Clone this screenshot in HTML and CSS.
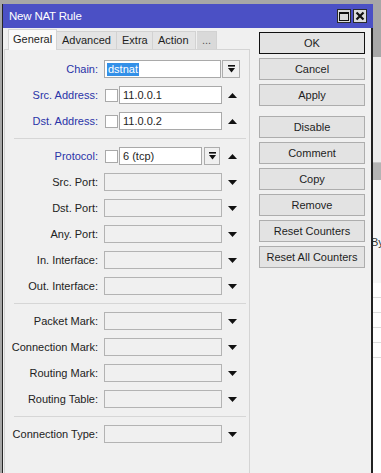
FILE: index.html
```html
<!DOCTYPE html>
<html lang="en">
<head>
  <meta charset="UTF-8" />
  <title>New NAT Rule</title>
  <link rel="stylesheet" href="styles.css">
</head>
<body>
  <div class="screen">
    <div class="window">
      <div class="titlebar">
        <span class="title">New NAT Rule</span>
        <div class="tb-btns">
          <span class="tb-btn"><span class="max-box"></span></span>
          <span class="tb-btn">
            <svg width="10" height="10" viewBox="0 0 10 10"><path d="M1.5 1.5l7 7M8.5 1.5l-7 7" stroke="#111" stroke-width="2.2"/></svg>
          </span>
        </div>
      </div>

      <div class="main">
        <div class="left">
          <div class="tabs">
            <span class="tab active">General</span>
            <span class="tab w-adv">Advanced</span>
            <span class="tab w-extra">Extra</span>
            <span class="tab w-action">Action</span>
            <span class="tab more">...</span>
          </div>

          <div class="page">
            <div class="row">
              <label class="lbl blue">Chain:</label>
              <div class="input chain"><span class="sel">dstnat</span></div>
              <span class="dd chain-dd">
                <svg width="7" height="8" viewBox="0 0 7 8"><rect width="7" height="1.6"/><path d="M0 3h7l-3.5 4.5z"/></svg>
              </span>
            </div>
            <div class="row">
              <label class="lbl blue">Src. Address:</label>
              <span class="check"></span>
              <div class="input addr">11.0.0.1</div>
              <span class="arrow"><svg width="9" height="5" viewBox="0 0 9 5"><path d="M0 5h9L4.5 0z"/></svg></span>
            </div>
            <div class="row">
              <label class="lbl blue">Dst. Address:</label>
              <span class="check"></span>
              <div class="input addr">11.0.0.2</div>
              <span class="arrow"><svg width="9" height="5" viewBox="0 0 9 5"><path d="M0 5h9L4.5 0z"/></svg></span>
            </div>

            <div class="sep"></div>

            <div class="row">
              <label class="lbl blue">Protocol:</label>
              <span class="check"></span>
              <div class="input proto">6 (tcp)</div>
              <span class="dd proto-dd">
                <svg width="7" height="8" viewBox="0 0 7 8"><rect width="7" height="1.6"/><path d="M0 3h7l-3.5 4.5z"/></svg>
              </span>
              <span class="arrow"><svg width="9" height="5" viewBox="0 0 9 5"><path d="M0 5h9L4.5 0z"/></svg></span>
            </div>
            <div class="row">
              <label class="lbl">Src. Port:</label>
              <div class="input empty"></div>
              <span class="arrow"><svg width="9" height="5" viewBox="0 0 9 5"><path d="M0 0h9L4.5 5z"/></svg></span>
            </div>
            <div class="row">
              <label class="lbl">Dst. Port:</label>
              <div class="input empty"></div>
              <span class="arrow"><svg width="9" height="5" viewBox="0 0 9 5"><path d="M0 0h9L4.5 5z"/></svg></span>
            </div>
            <div class="row">
              <label class="lbl">Any. Port:</label>
              <div class="input empty"></div>
              <span class="arrow"><svg width="9" height="5" viewBox="0 0 9 5"><path d="M0 0h9L4.5 5z"/></svg></span>
            </div>
            <div class="row">
              <label class="lbl">In. Interface:</label>
              <div class="input empty"></div>
              <span class="arrow"><svg width="9" height="5" viewBox="0 0 9 5"><path d="M0 0h9L4.5 5z"/></svg></span>
            </div>
            <div class="row">
              <label class="lbl">Out. Interface:</label>
              <div class="input empty"></div>
              <span class="arrow"><svg width="9" height="5" viewBox="0 0 9 5"><path d="M0 0h9L4.5 5z"/></svg></span>
            </div>

            <div class="sep"></div>

            <div class="row">
              <label class="lbl">Packet Mark:</label>
              <div class="input empty"></div>
              <span class="arrow"><svg width="9" height="5" viewBox="0 0 9 5"><path d="M0 0h9L4.5 5z"/></svg></span>
            </div>
            <div class="row">
              <label class="lbl">Connection Mark:</label>
              <div class="input empty"></div>
              <span class="arrow"><svg width="9" height="5" viewBox="0 0 9 5"><path d="M0 0h9L4.5 5z"/></svg></span>
            </div>
            <div class="row">
              <label class="lbl">Routing Mark:</label>
              <div class="input empty"></div>
              <span class="arrow"><svg width="9" height="5" viewBox="0 0 9 5"><path d="M0 0h9L4.5 5z"/></svg></span>
            </div>
            <div class="row">
              <label class="lbl">Routing Table:</label>
              <div class="input empty"></div>
              <span class="arrow"><svg width="9" height="5" viewBox="0 0 9 5"><path d="M0 0h9L4.5 5z"/></svg></span>
            </div>

            <div class="sep"></div>

            <div class="row">
              <label class="lbl">Connection Type:</label>
              <div class="input empty"></div>
              <span class="arrow"><svg width="9" height="5" viewBox="0 0 9 5"><path d="M0 0h9L4.5 5z"/></svg></span>
            </div>
          </div>
        </div>

        <div class="actions">
          <button class="btn default">OK</button>
          <button class="btn">Cancel</button>
          <button class="btn group-end">Apply</button>
          <button class="btn">Disable</button>
          <button class="btn">Comment</button>
          <button class="btn">Copy</button>
          <button class="btn">Remove</button>
          <button class="btn">Reset Counters</button>
          <button class="btn">Reset All Counters</button>
        </div>
      </div>
    </div>

    <div class="backdrop">
      <div class="bd-a"></div>
      <div class="bd-b"></div>
      <div class="bd-c"><span class="bd-text">By</span></div>
      <div class="bd-rows">
        <div class="bd-line"></div>
        <div class="bd-line"></div>
        <div class="bd-line"></div>
        <div class="bd-line"></div>
        <div class="bd-line"></div>
      </div>
    </div>
  </div>
</body>
</html>
```

FILE: styles.css
```css
* { box-sizing: border-box; }

body {
  margin: 0;
  background: #a7a7a7;
  font-family: "Liberation Sans", Arial, sans-serif;
  font-size: 11px;
  color: #1e1e1e;
}

.screen {
  display: flex;
  width: 381px;
  height: 473px;
  overflow: hidden;
}

/* dialog window */
.window {
  margin: 4px 0 0 2px;
  width: 371px;
  height: 469px;
  flex-shrink: 0;
  display: flex;
  flex-direction: column;
  border-left: 1px solid #262626;
  background: #f0f0f0;
}

.titlebar {
  height: 24px;
  flex-shrink: 0;
  display: flex;
  align-items: center;
  justify-content: space-between;
  padding: 0 6px 0 6px;
  background: #4b50c5;
  color: #fff;
}

.title {
  font-size: 11.5px;
  letter-spacing: -0.2px;
}

.tb-btns {
  display: flex;
  gap: 2px;
}

.tb-btn {
  width: 14px;
  height: 14px;
  display: flex;
  align-items: center;
  justify-content: center;
  background: #dcdcdc;
  border: 1px solid #2a2a2a;
}

.max-box {
  width: 10px;
  height: 9px;
  border: 1px solid #111;
  border-top-width: 2px;
}

.main {
  flex: 1;
  display: flex;
  border-right: 2px solid #222;
  min-height: 0;
}

.left {
  width: 256px;
  flex-shrink: 0;
  display: flex;
  flex-direction: column;
}

/* tabs */
.tabs {
  height: 21px;
  display: flex;
  align-items: flex-end;
  padding-left: 5px;
  position: relative;
  z-index: 1;
}

.tab {
  height: 18px;
  line-height: 17px;
  padding-left: 5px;
  background: #e4e4e4;
  border: 1px solid #d2d2d2;
  border-bottom: none;
  border-left: none;
  white-space: nowrap;
}

.tab.active {
  width: 49px;
  height: 21px;
  line-height: 19px;
  background: #f9f9f9;
  border: 1px solid #d4d4d4;
  border-bottom: none;
  padding-left: 4px;
  margin-bottom: -1px;
}

.w-adv { width: 60px; }
.w-extra { width: 36px; }
.w-action { width: 43px; }

.tab.more {
  width: 20px;
  margin-left: 1px;
  padding-left: 5px;
  background: #d9d9d9;
  color: #555;
}

.page {
  flex: 1;
  margin-left: 1px;
  width: 246px;
  padding-top: 10px;
  border: 1px solid #d4d4d4;
  border-bottom: none;
  background: #f0f0f0;
}

/* form rows */
.row {
  display: flex;
  align-items: center;
  height: 18px;
  margin-bottom: 8px;
}

.lbl {
  width: 99px;
  flex-shrink: 0;
  padding-right: 6px;
  text-align: right;
  white-space: nowrap;
  color: #222;
}

.lbl.blue {
  color: #2a33a8;
}

.input {
  height: 18px;
  line-height: 16px;
  padding-left: 3px;
  border: 1px solid #a9a9a9;
  background: #fff;
  white-space: nowrap;
  overflow: hidden;
}

.input.chain { width: 117px; padding-left: 2px; }
.input.addr { width: 103px; }
.input.proto { width: 83px; }

.input.empty {
  width: 118px;
  background: #f0f0f0;
  border-color: #b3b3b3;
}

.sel {
  display: inline-block;
  padding: 0 1px;
  line-height: 13px;
  background: #3390e8;
  color: #fff;
}

.check {
  width: 13px;
  height: 13px;
  margin: 0 1px;
  flex-shrink: 0;
  border: 1px solid #a9a9a9;
  background: #fff;
}

.dd {
  height: 18px;
  display: flex;
  align-items: center;
  justify-content: center;
  border: 1px solid #adadad;
  background: #f0f0f0;
}

.dd svg { fill: #111; }

.chain-dd { width: 18px; margin-left: 1px; }
.proto-dd { width: 16px; margin-left: 2px; margin-right: 2px; }

.arrow {
  width: 20px;
  display: flex;
  justify-content: center;
}

.arrow svg { fill: #111; }

.sep {
  height: 1px;
  margin: 1px 3px 8px 9px;
  background: #d6d6d6;
}

/* buttons column */
.actions {
  width: 106px;
  flex-shrink: 0;
  padding-top: 4px;
  display: flex;
  flex-direction: column;
  gap: 4px;
}

.btn {
  height: 22px;
  padding: 0;
  font-family: inherit;
  font-size: 11px;
  color: #1e1e1e;
  background: #e3e3e3;
  border: 1px solid #adadad;
  white-space: nowrap;
}

.btn.default {
  border-color: #111;
}

.btn.group-end {
  margin-bottom: 6px;
}

/* app behind the dialog */
.backdrop {
  flex: 1;
  margin-top: 57px;
  display: flex;
  flex-direction: column;
}

.bd-a {
  height: 106px;
  background: #ececec;
  border-bottom: 1px solid #c9c9c9;
}

.bd-b {
  height: 17px;
  background: #b4b4b4;
}

.bd-c {
  height: 103px;
  background: #f6f6f6;
  padding-top: 56px;
  overflow: hidden;
}

.bd-text {
  display: block;
  margin-left: -2px;
  font-size: 11px;
  color: #333;
}

.bd-rows {
  flex: 1;
  background: #fff;
}

.bd-line {
  height: 15px;
  border-bottom: 1px solid #dcdcdc;
}
```
